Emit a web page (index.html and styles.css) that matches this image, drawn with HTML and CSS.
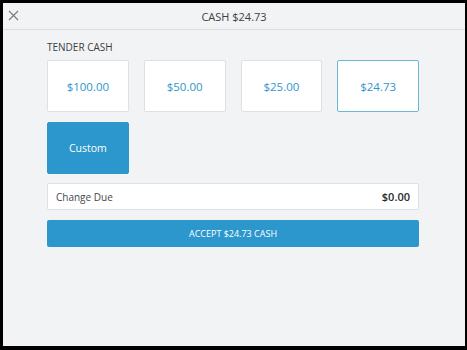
FILE: index.html
```html
<!DOCTYPE html>
<html lang="en">

<head>
    <title>Cash Tender</title>
    <link rel="stylesheet" href="styles.css">
</head>

<body>
    <div class="app">
        <div class="topbar">
            <button class="closeBtn" aria-label="Close">
                <svg width="11" height="11" viewBox="0 0 11 11">
                    <path d="M1 1L10 10M10 1L1 10" stroke="#7d8084" stroke-width="1.3" fill="none" />
                </svg>
            </button>
            <div class="title">CASH $24.73</div>
        </div>
        <div class="content">
            <div class="label">TENDER CASH</div>
            <div class="tenders">
                <button class="tender">$100.00</button>
                <button class="tender">$50.00</button>
                <button class="tender">$25.00</button>
                <button class="tender selected">$24.73</button>
                <button class="tender custom">Custom</button>
            </div>
            <div class="changeRow">
                <span>Change Due</span>
                <span class="changeAmt">$0.00</span>
            </div>
            <button class="acceptBtn">ACCEPT $24.73 CASH</button>
        </div>
    </div>
</body>

</html>
```

FILE: styles.css
```css
html,
body {
    margin: 0;
    background-color: #000;
}

body {
    padding: 3px 2px 0 3px;
    font-family: "Open Sans", "Noto Sans", sans-serif;
}

.app {
    height: 343px;
    background-color: rgb(242, 243, 245);
}

.topbar {
    position: relative;
    height: 26px;
    border-bottom: 1px solid rgb(220, 223, 226);
    display: flex;
    align-items: center;
    justify-content: center;
}

.closeBtn {
    position: absolute;
    left: 2px;
    top: 5px;
    border: 0;
    background: none;
    padding: 2px 3px;
    line-height: 0;
}

.title {
    font-size: 11px;
    color: rgb(60, 63, 66);
}

.content {
    padding: 10px 46px 0 44px;
}

.label {
    font-size: 10px;
    color: rgb(60, 63, 66);
    height: 20px;
    line-height: 14px;
}

.tenders {
    display: grid;
    grid-template-columns: repeat(4, 1fr);
    column-gap: 15px;
    row-gap: 10px;
}

button {
    font-family: inherit;
}

.tender {
    height: 52px;
    border: 1px solid rgb(221, 224, 228);
    border-radius: 2px;
    background-color: #fff;
    color: rgb(45, 150, 205);
    font-size: 11.5px;
    padding: 0;
}

.tender.selected {
    border-color: rgb(107, 183, 217);
}

.tender.custom {
    background-color: rgb(43, 151, 205);
    border-color: rgb(43, 151, 205);
    color: #fff;
    font-size: 10.5px;
}

.changeRow {
    margin-top: 9px;
    height: 25px;
    border: 1px solid rgb(221, 224, 228);
    border-radius: 2px;
    background-color: #fff;
    display: flex;
    align-items: center;
    justify-content: space-between;
    padding: 0 8px;
    font-size: 10px;
    color: rgb(70, 73, 76);
}

.changeAmt {
    font-weight: 600;
    font-size: 11px;
    color: rgb(40, 42, 45);
}

.acceptBtn {
    display: block;
    width: 100%;
    margin-top: 10px;
    height: 27px;
    border: 0;
    border-radius: 2px;
    background-color: rgb(43, 151, 205);
    color: #fff;
    font-size: 9px;
}
```
